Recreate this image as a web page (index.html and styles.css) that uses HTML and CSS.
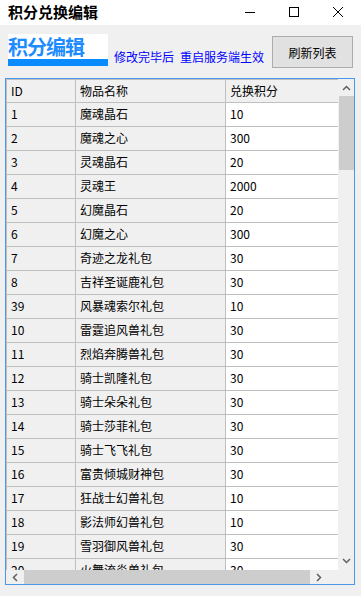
FILE: index.html
```html
<!DOCTYPE html>
<html lang="zh-CN">
<head>
    <meta charset="UTF-8">
    <meta name="viewport" content="width=device-width, initial-scale=1.0">
    <title>积分兑换编辑</title>
    <link rel="stylesheet" href="styles.css">
</head>
<body>

    <!-- Title Bar -->
    <div class="titlebar">
        <span class="title">积分兑换编辑</span>
        <div class="controls">
            <svg class="ctl" width="12" height="12" viewBox="0 0 12 12"><path d="M1 6.5h10" stroke="#000" stroke-width="1"/></svg>
            <svg class="ctl" width="12" height="12" viewBox="0 0 12 12"><rect x="1.5" y="1.5" width="9" height="9" fill="none" stroke="#000" stroke-width="1"/></svg>
            <svg class="ctl" width="12" height="12" viewBox="0 0 12 12"><path d="M1 1l10 10M11 1L1 11" stroke="#000" stroke-width="1"/></svg>
        </div>
    </div>

    <div class="client">
        <!-- Header -->
        <div class="top">
            <div class="label-box">
                <div class="label-text">积分编辑</div>
                <div class="label-bar"></div>
            </div>
            <div class="hint"><span>修改完毕后</span><span class="hint-gap">重启服务端生效</span></div>
            <button type="button" class="refresh">刷新列表</button>
        </div>

        <!-- Data Grid -->
        <div class="grid">
            <div class="grid-main">
                <div class="rows" id="rows">
                    <div class="row head">
                        <div class="cell c1">ID</div>
                        <div class="cell c2">物品名称</div>
                        <div class="cell c3">兑换积分</div>
                    </div>
                </div>
                <div class="vscroll">
                    <svg class="arrow" width="9" height="6" viewBox="0 0 9 6"><path d="M1 5L4.5 1.5 8 5" fill="none" stroke="#606060" stroke-width="1.5"/></svg>
                    <div class="vthumb"></div>
                    <div class="vspace"></div>
                    <svg class="arrow" width="9" height="6" viewBox="0 0 9 6"><path d="M1 1L4.5 4.5 8 1" fill="none" stroke="#606060" stroke-width="1.5"/></svg>
                </div>
            </div>
            <div class="grid-foot">
                <div class="hscroll">
                    <svg class="harrow" width="6" height="9" viewBox="0 0 6 9"><path d="M5 1L1.5 4.5 5 8" fill="none" stroke="#606060" stroke-width="1.5"/></svg>
                    <div class="hthumb"></div>
                    <svg class="harrow" width="6" height="9" viewBox="0 0 6 9"><path d="M1 1L4.5 4.5 1 8" fill="none" stroke="#606060" stroke-width="1.5"/></svg>
                </div>
                <div class="corner"></div>
            </div>
        </div>
    </div>

    <script>
        const items = [
            [1, "魔魂晶石", 10],
            [2, "魔魂之心", 300],
            [3, "灵魂晶石", 20],
            [4, "灵魂王", 2000],
            [5, "幻魔晶石", 20],
            [6, "幻魔之心", 300],
            [7, "奇迹之龙礼包", 30],
            [8, "吉祥圣诞鹿礼包", 30],
            [39, "风暴魂索尔礼包", 10],
            [10, "雷霆追风兽礼包", 30],
            [11, "烈焰奔腾兽礼包", 30],
            [12, "骑士凯隆礼包", 30],
            [13, "骑士朵朵礼包", 30],
            [14, "骑士莎菲礼包", 30],
            [15, "骑士飞飞礼包", 30],
            [16, "富贵倾城财神包", 30],
            [17, "狂战士幻兽礼包", 10],
            [18, "影法师幻兽礼包", 10],
            [19, "雪羽御风兽礼包", 30],
            [20, "火舞流炎兽礼包", 30]
        ];

        const rows = document.getElementById("rows");
        items.forEach(item => {
            const row = document.createElement("div");
            row.classList.add("row");
            row.innerHTML = `
                <div class="cell c1">${item[0]}</div>
                <div class="cell c2">${item[1]}</div>
                <div class="cell c3">${item[2]}</div>
            `;
            rows.appendChild(row);
        });
    </script>
</body>
</html>
```

FILE: styles.css
```css
body {
    margin: 0;
    width: 361px;
    height: 596px;
    overflow: hidden;
    font-family: "Noto Sans CJK SC", "Microsoft YaHei", sans-serif;
    font-size: 12px;
    background-color: #f0f0f0;
}

/* Title Bar */
.titlebar {
    height: 25px;
    background-color: #fff;
    display: flex;
    align-items: center;
    padding-left: 8px;
}

.title {
    font-size: 15px;
    font-weight: bold;
    color: #000;
    line-height: 25px;
    margin-top: -2px;
}

.controls {
    margin-left: auto;
    display: flex;
    margin-top: -2px;
    padding-right: 17px;
}

.ctl {
    display: block;
    margin-left: 32px;
}

.ctl:first-child {
    margin-left: 0;
}

/* Header Area */
.client {
    background-color: #f0f0f0;
}

.top {
    height: 53px;
    display: flex;
    padding: 0 8px;
}

.label-box {
    width: 100px;
    margin-top: 9px;
}

.label-text {
    height: 25px;
    background-color: #fff;
    color: #1e8cff;
    font-size: 20px;
    font-weight: bold;
    line-height: 25px;
    letter-spacing: -1px;
}

.label-bar {
    height: 7px;
    background-color: #0a8cff;
}

.hint {
    margin-left: 6px;
    margin-top: 24px;
    color: #0000ff;
    font-size: 12px;
    line-height: 16px;
}

.hint-gap {
    margin-left: 6px;
}

.refresh {
    margin-left: auto;
    margin-top: 11px;
    width: 81px;
    height: 32px;
    background-color: #e1e1e1;
    border: 1px solid #adadad;
    font-family: inherit;
    font-size: 12px;
    color: #000;
    padding: 0;
}

/* Data Grid */
.grid {
    margin-left: 5px;
    width: 348px;
    height: 505px;
    border: 1px solid #4a98e8;
    display: flex;
    flex-direction: column;
}

.grid-main {
    height: 491px;
    display: flex;
    overflow: hidden;
}

.rows {
    width: 332px;
    overflow: hidden;
}

.row {
    display: flex;
    height: 24px;
    border-bottom: 1px solid #bfbfbf;
    box-sizing: border-box;
}

.row.head {
    border-top: 1px solid #bfbfbf;
}

.cell {
    line-height: 22px;
    padding-left: 4px;
    box-sizing: border-box;
    white-space: nowrap;
    color: #000;
}

.row.head .cell {
    line-height: 21px;
}

.c1 {
    width: 70px;
    border-left: 1px solid #bfbfbf;
    border-right: 1px solid #bfbfbf;
    background-color: #f0f0f0;
}

.c2 {
    width: 150px;
    border-right: 1px solid #bfbfbf;
    background-color: #f0f0f0;
}

.c3 {
    width: 112px;
    background-color: #fff;
}

.row.head .c3 {
    background-color: #f0f0f0;
}

.vscroll {
    width: 16px;
    background-color: #f0f0f0;
    display: flex;
    flex-direction: column;
    align-items: center;
}

.arrow {
    display: block;
    margin: 6px 0;
}

.vthumb {
    width: 15px;
    height: 74px;
    background-color: #cdcdcd;
    margin-top: -1px;
}

.vspace {
    flex: 1;
}

.grid-foot {
    height: 14px;
    display: flex;
}

.hscroll {
    width: 332px;
    display: flex;
    align-items: center;
    background-color: #f0f0f0;
}

.harrow {
    display: block;
    margin: 0 6px;
}

.hthumb {
    width: 286px;
    height: 14px;
    background-color: #cdcdcd;
}

.corner {
    width: 16px;
    background-color: #f0f0f0;
}
```
